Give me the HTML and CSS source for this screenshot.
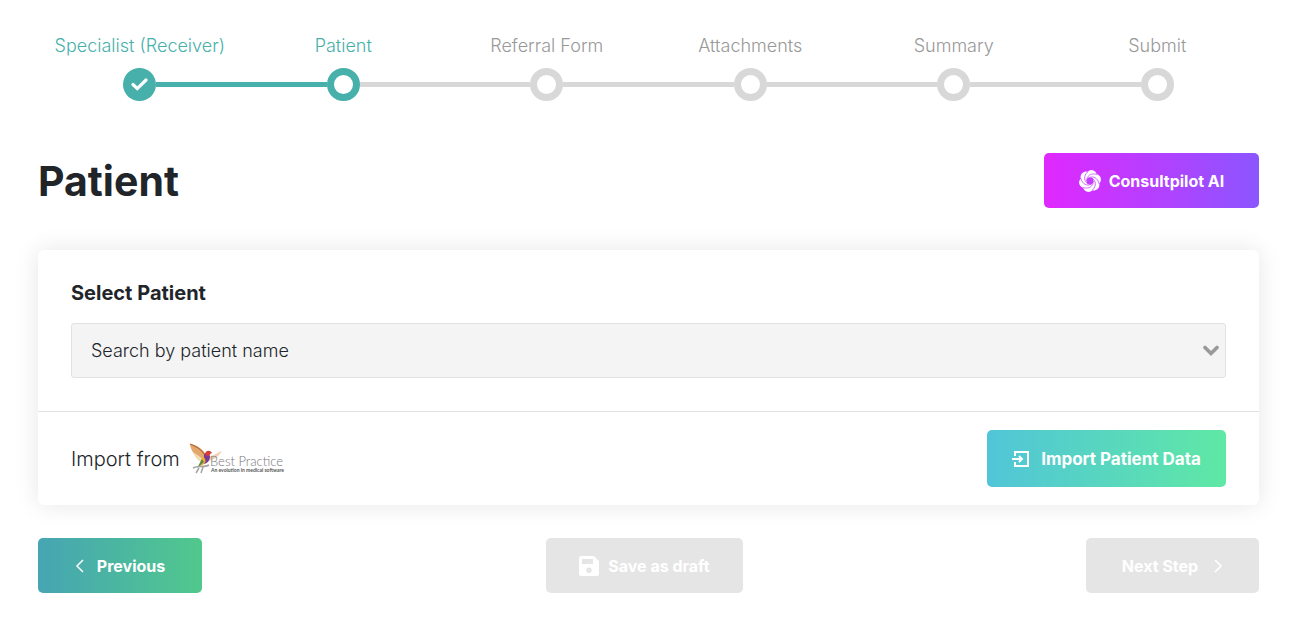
FILE: index.html
```html
<!DOCTYPE html>
<html lang="en">
<head>
  <meta charset="UTF-8">
  <meta name="viewport" content="width=device-width, initial-scale=1.0">
  <title>Patient</title>
  <link rel="stylesheet" href="styles.css">
</head>
<body>

  <ol class="steps">
    <li class="step done">
      <span class="step-label">Specialist (Receiver)</span>
      <div class="track">
        <span class="line hidden"></span>
        <span class="dot">
          <svg width="17" height="13" viewBox="0 0 17 13"><path d="M2 6.5 6.3 10.6 15 2" fill="none" stroke="#fff" stroke-width="3.2" stroke-linecap="round"/></svg>
        </span>
        <span class="line"></span>
      </div>
    </li>
    <li class="step current">
      <span class="step-label">Patient</span>
      <div class="track"><span class="line"></span><span class="dot"></span><span class="line"></span></div>
    </li>
    <li class="step">
      <span class="step-label">Referral Form</span>
      <div class="track"><span class="line"></span><span class="dot"></span><span class="line"></span></div>
    </li>
    <li class="step">
      <span class="step-label">Attachments</span>
      <div class="track"><span class="line"></span><span class="dot"></span><span class="line"></span></div>
    </li>
    <li class="step">
      <span class="step-label">Summary</span>
      <div class="track"><span class="line"></span><span class="dot"></span><span class="line"></span></div>
    </li>
    <li class="step">
      <span class="step-label">Submit</span>
      <div class="track"><span class="line"></span><span class="dot"></span><span class="line hidden"></span></div>
    </li>
  </ol>

  <header class="page-header">
    <h1>Patient</h1>
    <button type="button" class="btn btn-ai">
      <svg width="22" height="24" viewBox="0 0 22 24">
        <g fill="#fff">
          <circle cx="11" cy="12" r="9.6"/>
          <circle id="lobe" cx="12.500" cy="6.500" r="5.400"/>
          <use href="#lobe" transform="rotate(60 11 12)"/>
          <use href="#lobe" transform="rotate(120 11 12)"/>
          <use href="#lobe" transform="rotate(180 11 12)"/>
          <use href="#lobe" transform="rotate(240 11 12)"/>
          <use href="#lobe" transform="rotate(300 11 12)"/>
        </g>
        <circle cx="11" cy="12" r="3.4" fill="#c63bff"/>
        <g fill="none" stroke="#c63bff" stroke-width=".7">
          <path id="vane" d="M7.600 12C7.500 7 12 3.500 18 5.500"/>
          <use href="#vane" transform="rotate(60 11 12)"/>
          <use href="#vane" transform="rotate(120 11 12)"/>
          <use href="#vane" transform="rotate(180 11 12)"/>
          <use href="#vane" transform="rotate(240 11 12)"/>
          <use href="#vane" transform="rotate(300 11 12)"/>
        </g>
      </svg>
      Consultpilot AI
    </button>
  </header>

  <main class="card">
    <div class="card-body">
      <label class="field-label" for="patient">Select Patient</label>
      <div class="select-box">
        <select id="patient">
          <option>Search by patient name</option>
        </select>
        <svg class="chevron" width="16" height="12" viewBox="0 0 16 12"><path d="M2 2.5 8 8.5 14 2.5" fill="none" stroke="#999" stroke-width="3.6" stroke-linecap="round"/></svg>
      </div>
    </div>
    <div class="card-footer">
      <div class="import-from">
        <span>Import from</span>
        <svg width="96" height="34" viewBox="0 0 96 34" role="img" aria-label="Best Practice">
          <path d="M1 2C8 3 14 7 17 13L15 19C7 16 2 10 1 2Z" fill="#e3a66c"/>
          <path d="M1 2C7 4 12 7 16 13" fill="none" stroke="#b06a3c" stroke-width="1.2"/>
          <path d="M4 10C8 13 12 15 15 18L12 20C8 18 5 14 4 10Z" fill="#f3dcb4"/>
          <path d="M21 14C26 13 30 10 33 9C30 14 26 18 18 19Z" fill="#efd0b4"/>
          <path d="M15 13C16 11 19 11 21 14C21 18 19 21 15 22Z" fill="#7a3a92"/>
          <path d="M16 12C17 8 21 8 23 11L21 12C21 14 18 15 16 12Z" fill="#d63b34"/>
          <path d="M13 15C16 15 18 19 15 22L10 25Z" fill="#efb12a"/>
          <path d="M15 20 8 26 13 17Z" fill="#5d8a4a"/>
          <path d="M4 26C9 23 15 26 20 23M10 26 7 31M14 25 12 31" fill="none" stroke="#a3a3a3" stroke-width="1.5"/>
          <text class="logo-name" x="21" y="24">Best Practice</text>
          <text class="logo-tag" x="22" y="30">An evolution in medical software</text>
        </svg>
      </div>
      <button type="button" class="btn btn-import">
        <svg width="17" height="16" viewBox="0 0 17 16"><path d="M3 5V1H16V15H3V11M0 8H10M7 5 10 8 7 11" fill="none" stroke="#fff" stroke-width="2"/></svg>
        Import Patient Data
      </button>
    </div>
  </main>

  <footer class="actions">
    <button type="button" class="btn btn-prev">
      <svg width="9" height="14" viewBox="0 0 9 14"><path d="M8 1 2 7 8 13" fill="none" stroke="#fff" stroke-width="1.5"/></svg>
      Previous
    </button>
    <button type="button" class="btn btn-save" disabled>
      <svg width="22" height="22" viewBox="0 0 22 22"><path fill="#fff" fill-rule="evenodd" d="M3 1H16L21 6V19Q21 21 19 21H3Q1 21 1 19V3Q1 1 3 1ZM4 4V9H15V4ZM11 12.500A2.700 2.700 0 1 0 11 17.900A2.700 2.700 0 1 0 11 12.500Z"/></svg>
      Save as draft
    </button>
    <button type="button" class="btn btn-next" disabled>
      Next Step
      <svg width="9" height="14" viewBox="0 0 9 14"><path d="M1 1 7 7 1 13" fill="none" stroke="#fff" stroke-width="1.5"/></svg>
    </button>
  </footer>

</body>
</html>
```

FILE: styles.css
```css
:root {
  --teal: #47b0ab;
  --grey-line: #d8d8d8;
  --text: #212529;
}

* {
  margin: 0;
  padding: 0;
  box-sizing: border-box;
}

body {
  font-family: 'Inter', sans-serif;
  font-size: 18px;
  font-weight: 300;
  line-height: 24px;
  color: var(--text);
  background: #fff;
  padding: 34px 38px;
}

/* progress steps */
.steps {
  display: grid;
  grid-template-columns: repeat(6, 1fr);
  list-style: none;
  margin-bottom: 52px;
}

.step {
  display: flex;
  flex-direction: column;
  gap: 10px;
  text-align: center;
  color: #999;
}

.step.done,
.step.current {
  color: var(--teal);
}

.track {
  display: grid;
  grid-template-columns: 1fr auto 1fr;
  align-items: center;
}

.line {
  height: 5px;
  background: var(--grey-line);
}

.step.done .line,
.step.current .line:first-child {
  background: var(--teal);
}

.track .line.hidden {
  visibility: hidden;
}

.dot {
  display: flex;
  align-items: center;
  justify-content: center;
  width: 33px;
  height: 33px;
  border: 7px solid var(--grey-line);
  border-radius: 50%;
}

.step.current .dot {
  border-color: var(--teal);
}

.step.done .dot {
  border: none;
  background: var(--teal);
}

/* title row */
.page-header {
  display: flex;
  align-items: center;
  justify-content: space-between;
  margin-bottom: 42px;
}

h1 {
  font-size: 41px;
  font-weight: 700;
  line-height: 48px;
}

.btn {
  display: flex;
  align-items: center;
  justify-content: center;
  gap: 8px;
  height: 55px;
  padding: 0 32px;
  border: none;
  border-radius: 5px;
  font-family: inherit;
  font-size: 16px;
  font-weight: 700;
  color: #fff;
  cursor: pointer;
}

.btn:disabled {
  background: #e5e5e5;
  cursor: default;
}

.btn-ai {
  min-width: 215px;
  background: linear-gradient(90deg, #e028ff, #8b56ff);
}

/* card */
.card {
  border-radius: 6px;
  box-shadow: 0 0 24px rgba(0, 0, 0, 0.1);
  margin-bottom: 33px;
}

.card-body {
  padding: 31px 33px 33px;
  border-bottom: 1px solid #e2e2e2;
}

.field-label {
  display: block;
  font-size: 20px;
  font-weight: 700;
  margin-bottom: 18px;
}

.select-box {
  position: relative;
}

.select-box select {
  width: 100%;
  height: 55px;
  padding: 0 19px;
  border: 1px solid #e2e2e2;
  border-radius: 3px;
  background: #f4f4f4;
  color: inherit;
  font: inherit;
  appearance: none;
}

.chevron {
  position: absolute;
  top: 22px;
  right: 7px;
  pointer-events: none;
}

.card-footer {
  display: flex;
  align-items: center;
  justify-content: space-between;
  padding: 18px 33px;
}

.import-from {
  display: flex;
  align-items: center;
  gap: 9px;
  font-size: 20px;
}

.logo-name {
  font-family: 'Lato', sans-serif;
  font-size: 13px;
  font-weight: 300;
  fill: #777;
}

.logo-tag {
  font-family: 'Lato', sans-serif;
  font-size: 5px;
  font-weight: 700;
  fill: #555;
}

.btn-import {
  min-width: 239px;
  height: 57px;
  gap: 12px;
  padding: 0 23px;
  font-size: 17px;
  background: linear-gradient(90deg, #51c5d8, #5fe8a5);
}

/* bottom buttons */
.actions {
  display: flex;
  justify-content: space-between;
}

.btn-prev {
  min-width: 164px;
  gap: 13px;
  background: linear-gradient(90deg, #46a5b3, #51c88d);
}

.btn-save {
  min-width: 197px;
}

.btn-next {
  min-width: 173px;
  gap: 16px;
}
```
